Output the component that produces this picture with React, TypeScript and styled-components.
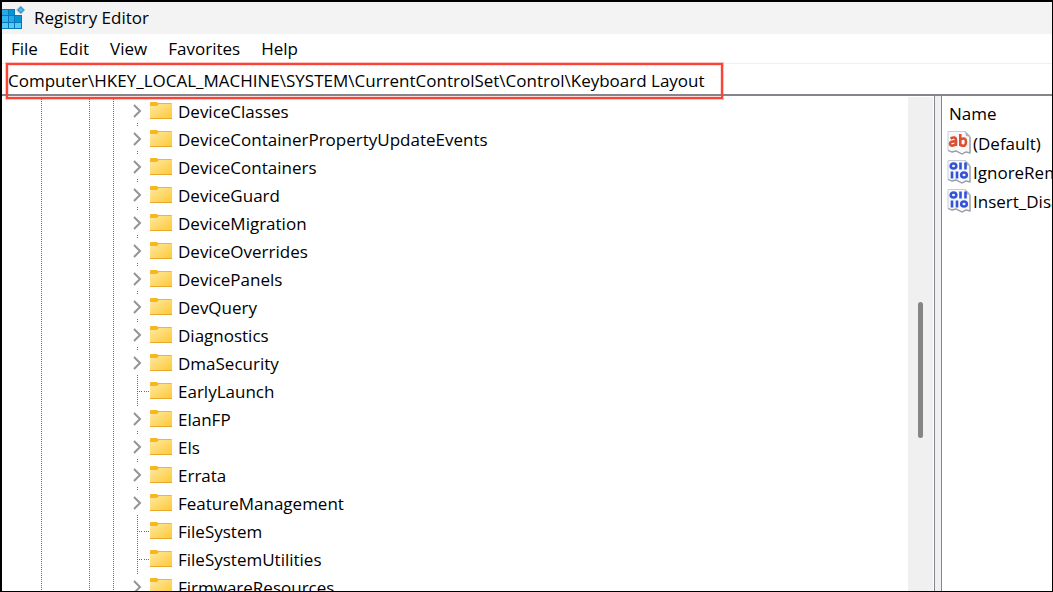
import React from "react";
import styled, { createGlobalStyle } from "styled-components";

const LINE = "#84868c";
const DOT = "#6e6e6e";

const GlobalStyle = createGlobalStyle`
  *, *::before, *::after { box-sizing: border-box; }
  body {
    margin: 0;
    background: #fff;
    color: #000;
    font-family: "Open Sans", "Noto Sans", sans-serif;
    font-size: 17px;
    line-height: 28px;
  }
  button, input { font: inherit; color: inherit; }
`;

const Window = styled.div`
  display: flex;
  flex-direction: column;
  height: 100vh;
  overflow: hidden;
  border: solid #000;
  border-width: 2px 1px 1px 2px;
`;

const TitleBar = styled.header`
  display: flex;
  flex: none;
  align-items: center;
  gap: 8px;
  height: 32px;
  background: #f3f3f3;
`;

const Title = styled.h1`
  margin: 0;
  font-size: 17px;
  font-weight: 400;
`;

const MenuBar = styled.nav`
  display: flex;
  flex: none;
  gap: 21px;
  height: 30px;
  padding: 1px 9px 0;
  border-bottom: 1px solid #f0f0f0;
`;

const MenuItem = styled.button`
  padding: 0;
  border: 0;
  background: none;
  white-space: nowrap;
`;

const AddressBar = styled.div`
  position: relative;
  flex: none;
  height: 32px;
  border-bottom: 2px solid ${LINE};
`;

const AddressInput = styled.input`
  display: block;
  width: 100%;
  height: 30px;
  padding: 2px 6px 0;
  border: 0;
  outline: 0;
  background: transparent;
`;

const Highlight = styled.div`
  position: absolute;
  top: -1px;
  left: 4px;
  width: 717px;
  height: 36px;
  border: 2px solid #fb4338;
  box-shadow: 0 0 0 1px #fb433850, inset 0 0 0 1px #fb433830;
  pointer-events: none;
`;

const Panes = styled.main`
  display: flex;
  flex: 1;
  min-height: 0;
`;

const TreePane = styled.section`
  display: flex;
  flex: 1;
  min-width: 0;
`;

const Guides = styled.div`
  display: flex;
  flex: none;
  padding-left: 39px;
`;

const Guide = styled.span<{ $gap: number }>`
  width: 1px;
  margin-right: ${(p) => p.$gap}px;
  background: repeating-linear-gradient(#fff 0 1px, ${DOT} 1px 2px);
`;

const Tree = styled.ul`
  flex: 1;
  min-width: 0;
  margin: 0;
  padding: 2px 0 0;
  list-style: none;
  overflow: hidden;
`;

const TreeRow = styled.li`
  display: flex;
  align-items: center;
  height: 28px;
  white-space: nowrap;
`;

const Expander = styled.button`
  display: flex;
  flex: none;
  flex-direction: column;
  align-items: center;
  justify-content: space-between;
  width: 11px;
  height: 28px;
  padding: 6px 0 0;
  border: 0;
  background: none;

  &::after {
    content: "";
    width: 1px;
    height: 4px;
    background: repeating-linear-gradient(#fff 0 1px, ${DOT} 1px 2px);
  }
`;

const LeafLine = styled.span`
  flex: none;
  width: 11px;
  height: 28px;
  background: repeating-linear-gradient(#fff 0 1px, ${DOT} 1px 2px) 5px 0 / 1px 28px no-repeat,
    repeating-linear-gradient(90deg, #fff 0 1px, ${DOT} 1px 2px) 6px 13px / 5px 1px no-repeat;
`;

const Stub = styled.span<{ $dotted: boolean }>`
  flex: none;
  width: 7px;
  height: 28px;
  background: ${(p) =>
    p.$dotted
      ? `repeating-linear-gradient(90deg, #fff 0 1px, ${DOT} 1px 2px) 0 13px / 6px 1px no-repeat`
      : "none"};
`;

const FolderLabel = styled.span`
  display: flex;
  align-items: center;
  gap: 6px;
`;

const ScrollTrack = styled.div`
  flex: none;
  width: 25px;
  margin: 1px 1px 0 0;
  padding: 205px 5px 0 10px;
  background: #f0f0f0;
`;

const ScrollThumb = styled.div`
  width: 5px;
  height: 136px;
  border-radius: 3px;
  background: #858585;
`;

const Splitter = styled.div`
  flex: none;
  width: 8px;
  border: solid ${LINE};
  border-width: 0 1px;
  background: #f0f0f0;
`;

const ValuesPane = styled.section`
  flex: none;
  width: 110px;
  padding: 4px 0 0 5px;
  overflow: hidden;
`;

const ValuesTable = styled.table`
  border-collapse: collapse;
  white-space: nowrap;
`;

const HeadCell = styled.th`
  height: 29px;
  padding: 0 2px 1px;
  font-weight: 400;
  text-align: left;
`;

const ValueCell = styled.td`
  height: 29px;
  padding: 0;
`;

const ValueLabel = styled.span`
  display: flex;
  align-items: center;
  gap: 2px;
  height: 29px;
`;

const Icon = styled.svg`
  display: block;
  flex: none;
`;

const RegistryIcon = () => (
  <Icon width="24" height="28" viewBox="0 0 24 28" aria-hidden="true">
    <path d="M0 5h13v6h7v14H0z" fill="#0878b8" />
    <path d="M0 6h6v5H0zM7 12h5v6H7z" fill="#27a9e8" />
    <path d="M7 6h5v5H7zM13 12h6v6h-6z" fill="#0795d2" />
    <path d="M0 12h6v6H0z" fill="#35b4f0" />
    <path d="M0 19h6v5H0zM7 19h5v5H7zM13 19h6v5h-6z" fill="#55cbfa" />
    <path d="M18.700 2l4 4-4 4-4-4z" fill="#2f8fc4" stroke="#8cc4e4" />
    <path d="M18.700 3.800l2.200 2.200-2.200 2.200-2.200-2.200z" fill="#5ab8e4" />
  </Icon>
);

const Chevron = () => (
  <Icon width="11" height="14" viewBox="0 0 11 14" aria-hidden="true">
    <path d="M2 1l6 6-6 6" fill="none" stroke="#949494" strokeWidth="2" />
  </Icon>
);

const FolderIcon = () => (
  <Icon width="22" height="20" viewBox="0 1 22 20" aria-hidden="true">
    <defs>
      <linearGradient id="folderFace" x1="0" y1="0" x2="1" y2="1">
        <stop offset="0" stopColor="#ffe8a2" />
        <stop offset="1" stopColor="#fdc935" />
      </linearGradient>
    </defs>
    <path d="M0 2q0-1 1-1h6l1 1h13q1 0 1 1v4H0z" fill="#f8b720" />
    <path d="M0 5h7l2-2h12q1 0 1 1v13.500H0z" fill="url(#folderFace)" />
    <path d="M0 17.500h22" stroke="#e8a92c" />
  </Icon>
);

const Paper = () => (
  <>
    <path d="M1 1.500h17l5 4.500v17l-4-1-4 2-6-3-4 1-4-2z" fill="#f6f8fb" stroke="#c9cdd3" />
    <path d="M18 1l1 5 4 1v-1z" fill="#aeb2b7" />
    <path d="M1 20.500l4 1.500 4-1 6 3 4-2 4 1V7" fill="none" stroke="#9b9ea3" strokeWidth="1.300" />
  </>
);

const StringIcon = () => (
  <Icon width="24" height="28" viewBox="0 0 24 28" aria-hidden="true">
    <Paper />
    <g fill="none" stroke="#dc5030" strokeWidth="2.600">
      <path d="M3.500 8.500q5.500-2.500 5.500 1.500v6M9 11.500q-6-.5-6 2t3 2q3-.5 3-3" />
      <path d="M13.300 4v12M13.500 9.500q5.500-3 5.500 2.500t-5.500 3" />
    </g>
  </Icon>
);

const BinaryIcon = () => (
  <Icon width="24" height="28" viewBox="0 0 24 28" aria-hidden="true">
    <Paper />
    <g fill="none" stroke="#3454d8" strokeWidth="2.600">
      <ellipse cx="6.500" cy="7" rx="2.800" ry="2.500" />
      <path d="M13.500 3.500v7M18.500 3.500v7M5 12.500v7M10 12.500v7" />
      <ellipse cx="17" cy="16" rx="2.800" ry="2.500" />
    </g>
  </Icon>
);

const menus = ["File", "Edit", "View", "Favorites", "Help"];

const keys: { name: string; leaf?: boolean }[] = [
  { name: "DeviceClasses" },
  { name: "DeviceContainerPropertyUpdateEvents" },
  { name: "DeviceContainers" },
  { name: "DeviceGuard" },
  { name: "DeviceMigration" },
  { name: "DeviceOverrides" },
  { name: "DevicePanels" },
  { name: "DevQuery" },
  { name: "Diagnostics" },
  { name: "DmaSecurity" },
  { name: "EarlyLaunch", leaf: true },
  { name: "ElanFP" },
  { name: "Els" },
  { name: "Errata" },
  { name: "FeatureManagement" },
  { name: "FileSystem", leaf: true },
  { name: "FileSystemUtilities", leaf: true },
  { name: "FirmwareResources" },
];

const values = [
  { name: "(Default)", binary: false },
  { name: "IgnoreRemoteKeyboardLayout", binary: true },
  { name: "Insert_Disabled", binary: true },
];

export default function App() {
  return (
    <Window>
      <GlobalStyle />
      <TitleBar>
        <RegistryIcon />
        <Title>Registry Editor</Title>
      </TitleBar>
      <MenuBar>
        {menus.map((m) => (
          <MenuItem key={m} type="button">{m}</MenuItem>
        ))}
      </MenuBar>
      <AddressBar>
        <AddressInput
          aria-label="Registry path"
          defaultValue={"Computer\\HKEY_LOCAL_MACHINE\\SYSTEM\\CurrentControlSet\\Control\\Keyboard Layout"}
        />
        <Highlight />
      </AddressBar>
      <Panes>
        <TreePane>
          <Guides>
            <Guide $gap={47} />
            <Guide $gap={23} />
            <Guide $gap={18} />
          </Guides>
          <Tree>
            {keys.map(({ name, leaf }) => (
              <TreeRow key={name}>
                {leaf ? (
                  <LeafLine />
                ) : (
                  <Expander type="button" aria-label={`Expand ${name}`}>
                    <Chevron />
                  </Expander>
                )}
                <Stub $dotted={!!leaf} />
                <FolderLabel>
                  <FolderIcon />
                  {name}
                </FolderLabel>
              </TreeRow>
            ))}
          </Tree>
          <ScrollTrack>
            <ScrollThumb />
          </ScrollTrack>
        </TreePane>
        <Splitter />
        <ValuesPane>
          <ValuesTable>
            <thead>
              <tr>
                <HeadCell>Name</HeadCell>
              </tr>
            </thead>
            <tbody>
              {values.map((v) => (
                <tr key={v.name}>
                  <ValueCell>
                    <ValueLabel>
                      {v.binary ? <BinaryIcon /> : <StringIcon />}
                      {v.name}
                    </ValueLabel>
                  </ValueCell>
                </tr>
              ))}
            </tbody>
          </ValuesTable>
        </ValuesPane>
      </Panes>
    </Window>
  );
}
